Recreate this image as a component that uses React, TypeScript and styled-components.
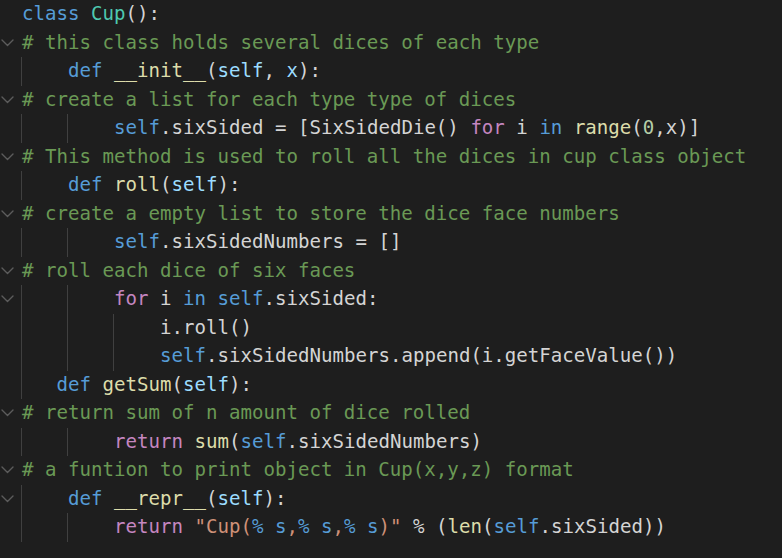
import React from "react";
import styled, { createGlobalStyle } from "styled-components";

const CH = 11.5;
const LINE_H = 28.5;

const Global = createGlobalStyle`
  html, body {
    margin: 0;
    padding: 0;
    background: #1e1e1e;
  }
  body {
    width: 782px;
    height: 558px;
    overflow: hidden;
  }
`;

const Editor = styled.div`
  width: 782px;
  height: 558px;
  background: #1e1e1e;
  display: flex;
  flex-direction: column;
  font-family: "DejaVu Sans Mono", "Liberation Mono", monospace;
  font-size: 19.1px;
  color: #d4d4d4;
`;

const Line = styled.div`
  display: flex;
  align-items: stretch;
  height: ${LINE_H}px;
  flex: none;
`;

const Gutter = styled.div`
  width: 22px;
  flex: none;
  display: flex;
  align-items: center;
  padding-left: 1px;
  box-sizing: border-box;
`;

const Code = styled.div`
  display: flex;
  align-items: stretch;
  white-space: pre;
`;

const Indent = styled.div`
  display: flex;
  margin-left: -1px;
  margin-right: 1px;
`;

const Guide = styled.span<{ $cols: number }>`
  display: block;
  box-sizing: border-box;
  width: ${(p) => p.$cols * CH}px;
  border-left: 1px solid #404040;
`;

const Text = styled.span`
  display: flex;
  align-items: center;
  line-height: ${LINE_H}px;
`;

type Kind = "k" | "c" | "f" | "p" | "t" | "m" | "r" | "s" | "n";

const colors: Record<Kind, string> = {
  k: "#569cd6",
  c: "#4ec9b0",
  f: "#dcdcaa",
  p: "#9cdcfe",
  t: "#d4d4d4",
  m: "#6a9955",
  r: "#c586c0",
  s: "#ce9178",
  n: "#b5cea8",
};

const Tok = styled.span<{ $kind: Kind }>`
  color: ${(p) => colors[p.$kind]};
`;

const Chevron = () => (
  <svg width="13" height="8" viewBox="0 0 13 8" fill="none">
    <polyline
      points="1,1 6.5,6.5 12,1"
      stroke="#5c5c5c"
      strokeWidth="1.4"
      strokeLinecap="round"
      strokeLinejoin="round"
    />
  </svg>
);

type Row = { indent: number; fold?: boolean; toks: [Kind, string][] };

const rows: Row[] = [
  { indent: 0, toks: [["k", "class"], ["t", " "], ["c", "Cup"], ["t", "():"]] },
  { indent: 0, fold: true, toks: [["m", "# this class holds several dices of each type"]] },
  {
    indent: 4,
    toks: [["k", "def"], ["t", " "], ["f", "__init__"], ["t", "("], ["p", "self"], ["t", ", "], ["p", "x"], ["t", "):"]],
  },
  { indent: 0, fold: true, toks: [["m", "# create a list for each type type of dices"]] },
  {
    indent: 8,
    toks: [
      ["k", "self"],
      ["t", ".sixSided = [SixSidedDie() "],
      ["r", "for"],
      ["t", " i "],
      ["k", "in"],
      ["t", " "],
      ["f", "range"],
      ["t", "("],
      ["n", "0"],
      ["t", ",x)]"],
    ],
  },
  { indent: 0, fold: true, toks: [["m", "# This method is used to roll all the dices in cup class object"]] },
  { indent: 4, toks: [["k", "def"], ["t", " "], ["f", "roll"], ["t", "("], ["p", "self"], ["t", "):"]] },
  { indent: 0, fold: true, toks: [["m", "# create a empty list to store the dice face numbers"]] },
  { indent: 8, toks: [["k", "self"], ["t", ".sixSidedNumbers = []"]] },
  { indent: 0, fold: true, toks: [["m", "# roll each dice of six faces"]] },
  {
    indent: 8,
    fold: true,
    toks: [["r", "for"], ["t", " i "], ["k", "in"], ["t", " "], ["k", "self"], ["t", ".sixSided:"]],
  },
  { indent: 12, toks: [["t", "i.roll()"]] },
  { indent: 12, toks: [["k", "self"], ["t", ".sixSidedNumbers.append(i.getFaceValue())"]] },
  { indent: 3, toks: [["k", "def"], ["t", " "], ["f", "getSum"], ["t", "("], ["p", "self"], ["t", "):"]] },
  { indent: 0, fold: true, toks: [["m", "# return sum of n amount of dice rolled"]] },
  {
    indent: 8,
    toks: [["r", "return"], ["t", " "], ["f", "sum"], ["t", "("], ["k", "self"], ["t", ".sixSidedNumbers)"]],
  },
  { indent: 0, fold: true, toks: [["m", "# a funtion to print object in Cup(x,y,z) format"]] },
  {
    indent: 4,
    fold: true,
    toks: [["k", "def"], ["t", " "], ["f", "__repr__"], ["t", "("], ["p", "self"], ["t", "):"]],
  },
  {
    indent: 8,
    toks: [
      ["r", "return"],
      ["t", " "],
      ["s", "\"Cup("],
      ["k", "% s"],
      ["s", ","],
      ["k", "% s"],
      ["s", ","],
      ["k", "% s"],
      ["s", ")\""],
      ["t", " % ("],
      ["f", "len"],
      ["t", "("],
      ["k", "self"],
      ["t", ".sixSided))"],
    ],
  },
];

const guidesFor = (n: number): number[] => {
  const out: number[] = [];
  for (let c = 0; c < n; c += 4) out.push(Math.min(4, n - c));
  return out;
};

export default function App() {
  return (
    <>
      <Global />
      <Editor>
        {rows.map((row, i) => (
          <Line key={i}>
            <Gutter>{row.fold ? <Chevron /> : null}</Gutter>
            <Code>
              {row.indent > 0 && (
                <Indent>
                  {guidesFor(row.indent).map((cols, j) => (
                    <Guide key={j} $cols={cols} />
                  ))}
                </Indent>
              )}
              <Text>
                {row.toks.map(([kind, text], j) => (
                  <Tok key={j} $kind={kind}>
                    {text}
                  </Tok>
                ))}
              </Text>
            </Code>
          </Line>
        ))}
      </Editor>
    </>
  );
}
